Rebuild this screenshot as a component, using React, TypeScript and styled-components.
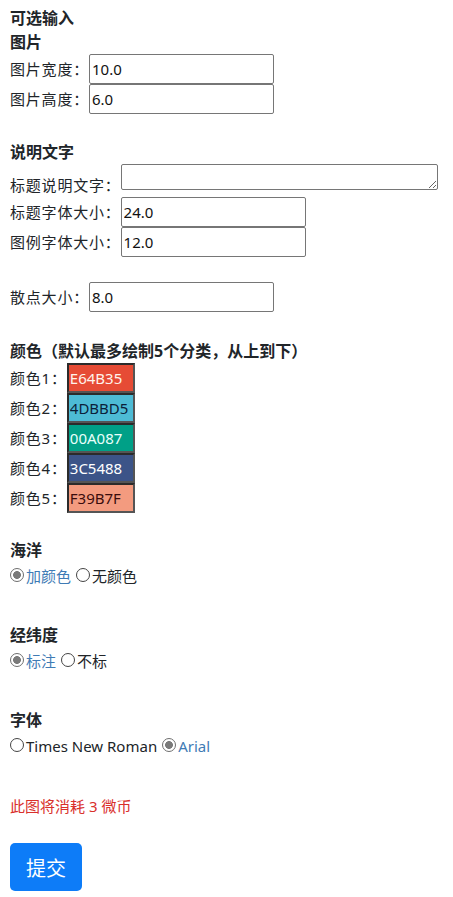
import React, { useState } from 'react'
import styled, { createGlobalStyle } from 'styled-components'

const GlobalStyle = createGlobalStyle`
  html, body {
    margin: 0;
    padding: 0;
    background: #fff;
  }
  body {
    font-family: 'Noto Sans', 'Noto Sans CJK SC', sans-serif;
    color: #212529;
  }
`

interface ColorItem {
  hex: string
  text: string
}

const colors: ColorItem[] = [
  { hex: 'E64B35', text: '#fff4ec' },
  { hex: '4DBBD5', text: '#0b1e3a' },
  { hex: '00A087', text: '#e9fffb' },
  { hex: '3C5488', text: '#ffffff' },
  { hex: 'F39B7F', text: '#3a0d0d' },
]

interface RadioGroupProps {
  name: string
  options: string[]
  initial: string
}

const RadioGroup = ({ name, options, initial }: RadioGroupProps) => {
  const [value, setValue] = useState(initial)
  return (
    <RadioRow>
      {options.map((opt) => (
        <RadioLabel key={opt} $checked={value === opt}>
          <RadioInput
            type='radio'
            name={name}
            checked={value === opt}
            onChange={() => setValue(opt)}
          />
          {opt}
        </RadioLabel>
      ))}
    </RadioRow>
  )
}

const App = () => {
  return (
    <>
      <GlobalStyle />
      <Form onSubmit={(e) => e.preventDefault()}>
        <Title>可选输入</Title>
        <Title>图片</Title>
        <FieldRow>
          <Label>图片宽度：</Label>
          <TextInput defaultValue='10.0' />
        </FieldRow>
        <FieldRow>
          <Label>图片高度：</Label>
          <TextInput defaultValue='6.0' />
        </FieldRow>

        {/* 说明文字 */}
        <Title $gap={26}>说明文字</Title>
        <AreaRow>
          <AreaLabel>标题说明文字：</AreaLabel>
          <TextArea />
        </AreaRow>
        <FieldRow>
          <Label>标题字体大小：</Label>
          <TextInput defaultValue='24.0' />
        </FieldRow>
        <FieldRow>
          <Label>图例字体大小：</Label>
          <TextInput defaultValue='12.0' />
        </FieldRow>

        <FieldRow $gap={25}>
          <Label>散点大小：</Label>
          <TextInput defaultValue='8.0' />
        </FieldRow>

        {/* 颜色 */}
        <Title $gap={27}>颜色（默认最多绘制5个分类，从上到下）</Title>
        {colors.map((c, i) => (
          <FieldRow key={c.hex}>
            <Label>颜色{i + 1}：</Label>
            <ColorInput
              defaultValue={c.hex}
              style={{ background: `#${c.hex}`, color: c.text }}
            />
          </FieldRow>
        ))}

        <Title $gap={25}>海洋</Title>
        <RadioGroup name='ocean' options={['加颜色', '无颜色']} initial='加颜色' />

        <Title $gap={35}>经纬度</Title>
        <RadioGroup name='grid' options={['标注', '不标']} initial='标注' />

        <Title $gap={35}>字体</Title>
        <RadioGroup name='font' options={['Times New Roman', 'Arial']} initial='Arial' />

        <Cost>此图将消耗 3 微币</Cost>
        <SubmitBtn type='submit'>提交</SubmitBtn>
      </Form>
    </>
  )
}

export default App

const Form = styled.form`
  display: flex;
  flex-direction: column;
  align-items: flex-start;
  padding: 6px 10px 6px;
  font-size: 15px;
`
const Title = styled.div<{ $gap?: number }>`
  margin-top: ${(p) => p.$gap ?? 0}px;
  font-size: 16px;
  font-weight: 700;
  line-height: 24px;
`
const FieldRow = styled.div<{ $gap?: number }>`
  display: flex;
  align-items: center;
  height: 30px;
  margin-top: ${(p) => p.$gap ?? 0}px;
`
const Label = styled.span`
  line-height: 24px;
  letter-spacing: 0.8px;
  white-space: nowrap;
`
const TextInput = styled.input`
  box-sizing: border-box;
  width: 185px;
  height: 30px;
  padding: 1px 2px;
  border: 1px solid #767676;
  border-radius: 2px;
  font-family: 'Noto Sans', sans-serif;
  font-size: 15px;
  color: #111;
  outline: none;
`

// 说明文字
const AreaRow = styled.div`
  display: flex;
  align-items: flex-start;
  height: 33px;
`
const AreaLabel = styled(Label)`
  padding-top: 9px;
`
const TextArea = styled.textarea`
  box-sizing: border-box;
  width: 317px;
  height: 26px;
  padding: 2px;
  border: 1px solid #767676;
  border-radius: 2px;
  font-family: 'Noto Sans', sans-serif;
  font-size: 14px;
  resize: both;
  outline: none;
`

// 颜色
const ColorInput = styled.input`
  box-sizing: border-box;
  width: 68px;
  height: 30px;
  padding: 0 1px;
  border: 2px solid #3a3a3a;
  border-color: #2b2b2b #555 #555 #2b2b2b;
  border-radius: 0;
  font-family: 'Noto Sans', sans-serif;
  font-size: 15px;
  outline: none;
`

// 单选
const RadioRow = styled.div`
  display: flex;
  align-items: center;
  gap: 5px;
  line-height: 24px;
  margin-top: 2px;
`
const RadioLabel = styled.label<{ $checked: boolean }>`
  display: flex;
  align-items: center;
  color: ${(p) => (p.$checked ? '#3f7bb5' : '#212529')};
  white-space: nowrap;
  cursor: pointer;
`
const RadioInput = styled.input`
  appearance: none;
  box-sizing: border-box;
  width: 14px;
  height: 14px;
  margin: 0 2px 0 0;
  border: 1px solid #444;
  border-radius: 50%;
  background: #fff;
  position: relative;
  top: -1px;

  &:checked {
    border-color: #6e6e6e;
    background: radial-gradient(circle, #7a7a7a 0 3.6px, #fff 4.2px);
  }
`

const Cost = styled.div`
  margin-top: 36px;
  line-height: 24px;
  color: #d9302c;
`
const SubmitBtn = styled.button`
  margin-top: 25px;
  width: 72px;
  height: 48px;
  border: none;
  border-radius: 5px;
  background: #0d7cf8;
  color: #fff;
  font-family: 'Noto Sans CJK SC', sans-serif;
  font-size: 20px;
  cursor: pointer;
`
